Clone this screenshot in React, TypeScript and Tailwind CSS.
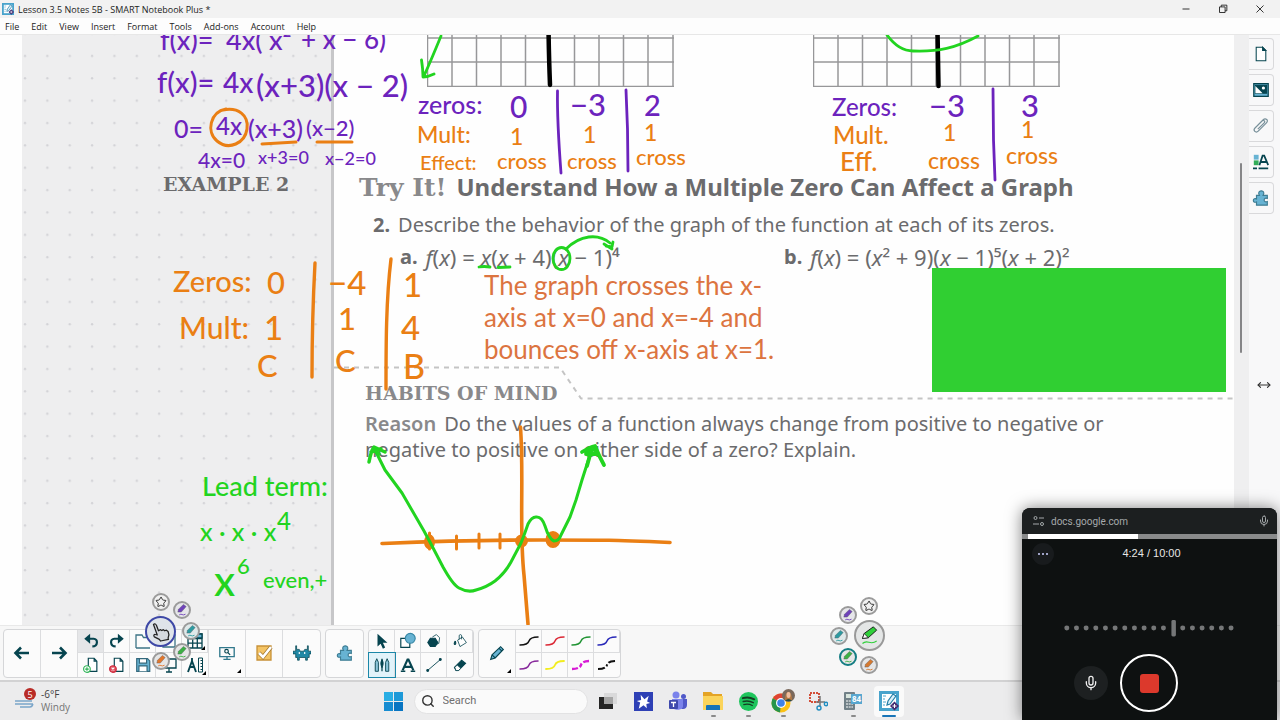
import type { ReactNode } from "react";
import { Mic, MoveHorizontal, Search, Star } from "lucide-react";

const menus = ["File", "Edit", "View", "Insert", "Format", "Tools", "Add-ons", "Account", "Help"];

const PURPLE = "text-[#6c23bd]";
const ORANGE = "text-[#ea7f14]";
const GREEN = "text-[#22d420]";

type Note = { text: string; color: string; at: string };

const notes: Note[] = [
  { text: "f(x)=", color: PURPLE, at: "left-[160px] -top-[9px] text-[27px]" },
  { text: "4x(", color: PURPLE, at: "left-[226px] -top-[9px] text-[27px]" },
  { text: "x²", color: PURPLE, at: "left-[269px] -top-[9px] text-[27px]" },
  { text: "+ x − 6)", color: PURPLE, at: "left-[301px] -top-[9px] text-[26px]" },
  { text: "f(x)=", color: PURPLE, at: "left-[157px] top-[32px] text-[29px]" },
  { text: "4x", color: PURPLE, at: "left-[223px] top-[33px] text-[28px]" },
  { text: "(x+3)(x − 2)", color: PURPLE, at: "left-[256px] top-[35px] text-[31px]" },
  { text: "0=", color: PURPLE, at: "left-[174px] top-[81px] text-[25px]" },
  { text: "4x", color: PURPLE, at: "left-[216px] top-[79px] text-[24px]" },
  { text: "(x+3)", color: PURPLE, at: "left-[248px] top-[81px] text-[25px]" },
  { text: "(x−2)", color: PURPLE, at: "left-[306px] top-[82px] text-[22px]" },
  { text: "4x=0", color: PURPLE, at: "left-[198px] top-[114px] text-[21px]" },
  { text: "x+3=0", color: PURPLE, at: "left-[258px] top-[113px] text-[18px]" },
  { text: "x−2=0", color: PURPLE, at: "left-[325px] top-[114px] text-[18px]" },
  { text: "zeros:", color: PURPLE, at: "left-[418px] top-[57px] text-[25px]" },
  { text: "0", color: PURPLE, at: "left-[510px] top-[56px] text-[30px]" },
  { text: "−3", color: PURPLE, at: "left-[570px] top-[54px] text-[31px]" },
  { text: "2", color: PURPLE, at: "left-[644px] top-[55px] text-[29px]" },
  { text: "Mult:", color: ORANGE, at: "left-[417px] top-[88px] text-[23px]" },
  { text: "Effect:", color: ORANGE, at: "left-[420px] top-[117px] text-[20px]" },
  { text: "cross", color: ORANGE, at: "left-[497px] top-[115px] text-[22px]" },
  { text: "cross", color: ORANGE, at: "left-[567px] top-[115px] text-[22px]" },
  { text: "cross", color: ORANGE, at: "left-[636px] top-[111px] text-[22px]" },
  { text: "Zeros:", color: PURPLE, at: "left-[832px] top-[60px] text-[24px]" },
  { text: "−3", color: PURPLE, at: "left-[929px] top-[55px] text-[31px]" },
  { text: "3", color: PURPLE, at: "left-[1021px] top-[55px] text-[31px]" },
  { text: "Mult.", color: ORANGE, at: "left-[833px] top-[88px] text-[24px]" },
  { text: "Eff.", color: ORANGE, at: "left-[840px] top-[113px] text-[26px]" },
  { text: "cross", color: ORANGE, at: "left-[928px] top-[114px] text-[23px]" },
  { text: "cross", color: ORANGE, at: "left-[1006px] top-[109px] text-[23px]" },
  { text: "1", color: ORANGE, at: "left-[510px] top-[90px] text-[23px]" },
  { text: "1", color: ORANGE, at: "left-[583px] top-[88px] text-[23px]" },
  { text: "1", color: ORANGE, at: "left-[644px] top-[86px] text-[23px]" },
  { text: "1", color: ORANGE, at: "left-[943px] top-[86px] text-[23px]" },
  { text: "1", color: ORANGE, at: "left-[1021px] top-[83px] text-[23px]" },
  { text: "Zeros:", color: ORANGE, at: "left-[173px] top-[231px] text-[29px]" },
  { text: "0", color: ORANGE, at: "left-[267px] top-[232px] text-[31px]" },
  { text: "−4", color: ORANGE, at: "left-[328px] top-[231px] text-[33px]" },
  { text: "1", color: ORANGE, at: "left-[403px] top-[233px] text-[33px]" },
  { text: "Mult:", color: ORANGE, at: "left-[179px] top-[277px] text-[30px]" },
  { text: "1", color: ORANGE, at: "left-[264px] top-[276px] text-[33px]" },
  { text: "1", color: ORANGE, at: "left-[338px] top-[268px] text-[31px]" },
  { text: "4", color: ORANGE, at: "left-[401px] top-[276px] text-[33px]" },
  { text: "C", color: ORANGE, at: "left-[257px] top-[315px] text-[31px]" },
  { text: "C", color: ORANGE, at: "left-[335px] top-[310px] text-[31px]" },
  { text: "B", color: ORANGE, at: "left-[403px] top-[314px] text-[34px]" },
  { text: "Lead term:", color: GREEN, at: "left-[202px] top-[437px] text-[27px]" },
  { text: "x · x · x", color: GREEN, at: "left-[200px] top-[484px] text-[25px]" },
  { text: "4", color: GREEN, at: "left-[277px] top-[474px] text-[24px]" },
  { text: "x", color: GREEN, at: "left-[214px] top-[524px] text-[42px]" },
  { text: "6", color: GREEN, at: "left-[237px] top-[520px] text-[22px]" },
  { text: "even,+", color: GREEN, at: "left-[263px] top-[534px] text-[22px]" },
];

function Glyph({ children, className = "size-5" }: { children: ReactNode; className?: string }) {
  return (
    <svg viewBox="0 0 20 20" className={className} fill="none" stroke="#06444f" strokeWidth="1.3" aria-hidden="true">
      {children}
    </svg>
  );
}

function Puzzle() {
  return (
    <Glyph className="size-[18px]">
      <path d="M5 7h3.200C6.500 4 8 2 10.300 2s3.800 2 2.100 5H17v3.500c-2.500-1-3.500.3-3.500 1.700s1 2.700 3.500 1.700V18H5v-3.600c-2.500 1-3.500-.4-3.500-1.700S2.500 10 5 11z" fill="#67b3d3" stroke="#3f7d93" />
    </Glyph>
  );
}

function Arrow({ flip = false }: { flip?: boolean }) {
  return (
    <Glyph className={flip ? "size-5 rotate-180" : "size-5"}>
      <path d="M4 10h13M9 4.500 3.500 10 9 15.500" strokeWidth="2.600" />
    </Glyph>
  );
}

function Turn({ flip = false }: { flip?: boolean }) {
  return (
    <Glyph className={flip ? "size-[18px] -scale-x-100" : "size-[18px]"}>
      <path d="M5 7.500h8c5 0 5 8.500-1.500 8.500" strokeWidth="2.400" />
      <path d="M9 2v11L2.500 7.500z" fill="#06444f" stroke="none" />
    </Glyph>
  );
}

function Corner() {
  return <span className="absolute right-1 bottom-1 border-2 border-transparent border-r-black border-b-black" />;
}

const page = <path d="M7 2.500h6.500l3 3.200V17H7z M13.500 2.500v3.200h3" fill="#fff" />;

type Tool = { label: string; icon: ReactNode; corner?: boolean; active?: boolean };

const fileTools: Tool[] = [
  { label: "Undo", icon: <Turn />, active: true },
  { label: "Redo", icon: <Turn flip /> },
  { label: "Open", icon: <Glyph><path d="M3 17V4h6l1.500 2.500H18M3 17h14M13 3l2-2 3 3" stroke="#3d7486" /></Glyph> },
  { label: "Paste", icon: <Glyph><path d="M4 4h12v12H4z" stroke="#3d7486" /></Glyph> },
  {
    label: "Table",
    icon: <Glyph><path d="M3 3h14v14H3zM3 7.500h14M3 12.200h14M7.700 3v14M12.300 3v14" /><path d="M3 3h14v4H3z" fill="#67b3d3" /></Glyph>,
    corner: true,
  },
  { label: "Add page", icon: <Glyph className="size-[18px]">{page}<circle cx="5.500" cy="14.500" r="3.700" fill="#fff" stroke="#2fb457" /><path d="M3.500 14.500h4m-2-2v4" stroke="#2fb457" /></Glyph> },
  { label: "Delete page", icon: <Glyph className="size-[18px]">{page}<circle cx="5.500" cy="14.500" r="3.700" fill="#e05361" stroke="#d02c3f" /><path d="m4 13 3 3m0-3-3 3" stroke="#fff" /></Glyph> },
  { label: "Save", icon: <Glyph className="size-[18px]"><path d="M3 3h12l2.500 2.500V17H3z" fill="#67b3d3" stroke="#33687c" /><path d="M6 3h8v5H6zM5.500 17v-6h9v6" fill="#fff" stroke="#33687c" /></Glyph> },
  { label: "Screen shade", icon: <Glyph><path d="M3 4h14v9H3zM10 13v4m-3 0h6" /></Glyph> },
  {
    label: "Measurement tools",
    icon: <Glyph><path d="M7 3v3M7 6l-4 11M7 6l4 11M4.500 12h5" strokeWidth="1.900" /><path d="M13.500 3h4v14h-4zM15.500 5.500h2m-2 3h2m-2 3h2m-2 3h2" strokeWidth="1" /></Glyph>,
    corner: true,
  },
];

const drawTools: Tool[] = [
  { label: "Select", icon: <Glyph className="size-[18px]"><path d="M5 2v14l3.500-3 2.500 5.500 2.500-1.200-2.500-5.300h5z" fill="#06444f" stroke="none" /></Glyph> },
  { label: "Shapes", icon: <Glyph className="size-[18px]"><path d="M2 7h10v10H2z" fill="#fff" /><circle cx="12.500" cy="7" r="5.500" fill="#67b3d3" stroke="#3888a6" /></Glyph> },
  { label: "Regular polygons", icon: <Glyph className="size-4"><path d="m8 5 5-3 4 4-1 7-5 2" fill="#fff" strokeWidth="1" /><path d="M5.500 6.500h6l3.300 5.300-3.300 5.200h-6l-3.300-5.200z" fill="#06444f" /></Glyph> },
  { label: "Fill", icon: <Glyph className="size-4"><path d="m7 9 6-4 5 7-8 5zM9 8V3.500c0-2 3-2 3 0V8" fill="#fff" strokeWidth="1" /><path d="M4 10c-4 6 3 6 0 0" fill="#06444f" /></Glyph> },
  {
    label: "Pens",
    active: true,
    icon: <Glyph className="size-[18px]"><path d="M2.500 7v10h3.500V7L4.200 3zM14 7v10h3.500V7l-1.800-4z" fill="#8cc5da" strokeWidth="1" /><path d="M10 3v14" strokeWidth="1.400" /><path d="M10 4c-2 4-1.500 5 0 9 1.500-4 2-5 0-9" fill="#06444f" strokeWidth="1" /></Glyph>,
  },
  { label: "Text", icon: <Glyph className="size-[18px]"><path d="m4 16 5.500-12h1L16 16M6.500 12h7" strokeWidth="2.400" /><path d="M2 17h5m6 0h5" strokeWidth="1.800" /></Glyph> },
  { label: "Line", icon: <Glyph className="size-[18px]"><path d="M3 16 17 4" strokeWidth="1" /><circle cx="3" cy="16" r="1" fill="#06444f" /><circle cx="17" cy="4" r="1" fill="#06444f" /></Glyph> },
  { label: "Eraser", icon: <Glyph className="size-4"><path d="m3 13 9-9 5 4-9 9H5z" fill="#06444f" /><path d="m3.500 13 3-3 4.500 4-3 3H5z" fill="#fff" strokeWidth="1" /></Glyph> },
];

const penLines = [
  { label: "Black pen", stroke: "#111", width: 1.5 },
  { label: "Red pen", stroke: "#db2734", width: 1.5 },
  { label: "Green pen", stroke: "#219434", width: 1.5 },
  { label: "Blue pen", stroke: "#2929b8", width: 1.5 },
  { label: "Purple pen", stroke: "#87289b", width: 1.5 },
  { label: "Yellow pen", stroke: "#f2ed1f", width: 1.8 },
  { label: "Magenta dashed pen", stroke: "#d81bd5", width: 2.4, dash: "6 2 4 2" },
  { label: "Black dashed pen", stroke: "#111", width: 2.1, dash: "7 2 2 2" },
];

function ToolGroup({ children }: { children: ReactNode }) {
  return <div className="flex h-[49px] divide-x divide-[#dcdddf] rounded border border-[#d5d6d8] bg-[#fbfbfb]">{children}</div>;
}

function BigTool({ label, children, corner = false }: { label: string; children: ReactNode; corner?: boolean }) {
  return (
    <button aria-label={label} className="relative grid w-[37px] place-items-center">
      {children}
      {corner && <Corner />}
    </button>
  );
}

function SmallTool({ tool, highlight, edge }: { tool: Tool; highlight: string; edge: string }) {
  return (
    <button aria-label={tool.label} className={`relative grid w-[26px] place-items-center ${edge} ${tool.active ? highlight : ""}`}>
      {tool.icon}
      {tool.corner && <span className="absolute right-0.5 bottom-0.5 border-2 border-transparent border-r-black border-b-black" />}
    </button>
  );
}

function RingPen({ color }: { color: string }) {
  return (
    <svg viewBox="0 0 20 20" className="size-3.5" fill="none" aria-hidden="true">
      <path d="m4 13 1-4 7-7 4 3-7 8z" fill={color} stroke="#5a5f66" strokeWidth="0.600" />
      <path d="M6 17c4-3 4 2 9-1" stroke={color} strokeWidth="1.300" />
    </svg>
  );
}

const ring = "absolute grid place-items-center rounded-full border-2 size-[18px]";

function Hand() {
  return (
    <svg viewBox="0 0 24 24" className="size-5" fill="#d5d9df" stroke="#222" strokeWidth="1.500" strokeLinejoin="round" aria-hidden="true">
      <path d="M3 3c1.500-1.500 3-.5 3.500 1L9 10.500l2-1.300 2 1 1.800-1 1.700 1.300 2-.7 2 1.500 1 4-1 4 .5 1.500-9.500 2-1.500-2-6-3c-1.500-2 0-3.300 1.500-2.800l2 .6z" />
    </svg>
  );
}

function PenRings() {
  return (
    <>
      <button aria-label="Favourite tools" className={`${ring} bottom-[71px] left-[152px] border-[#9b9b9b] bg-[#f1f1f1]`}><Star className="size-3 text-[#333]" /></button>
      <button aria-label="Purple pen" className={`${ring} bottom-[63px] left-[173px] border-[#9b9b9b] bg-[#e6e6ea]`}><RingPen color="#6f42ba" /></button>
      <button aria-label="Teal pen" className={`${ring} bottom-[42px] left-[182px] border-[#9b9b9b] bg-[#dfe9ea]`}><RingPen color="#2d9aa0" /></button>
      <button aria-label="Green pen" className={`${ring} bottom-[21px] left-[173px] border-[#9b9b9b] bg-[#e6e6e6]`}><RingPen color="#3db044" /></button>
      <button aria-label="Orange pen" className={`${ring} bottom-3 left-[152px] border-[#9b9b9b] bg-[#e6e6e6]`}><RingPen color="#e2762b" /></button>
      <button aria-label="Touch" className="absolute bottom-[35px] left-[145px] grid size-[31px] place-items-center rounded-full border-2 border-[#3e48a6] bg-[#dfe4ea]"><Hand /></button>

      <button aria-label="Favourite tools" className={`${ring} bottom-[67px] left-[860px] border-[#9b9b9b] bg-[#f1f1f1]`}><Star className="size-3 text-[#333]" /></button>
      <button aria-label="Purple pen" className={`${ring} bottom-[58px] left-[839px] border-[#9b9b9b] bg-[#e6e6ea]`}><RingPen color="#6f42ba" /></button>
      <button aria-label="Teal pen" className={`${ring} bottom-[37px] left-[830px] border-[#9b9b9b] bg-[#dfe9ea]`}><RingPen color="#2d9aa0" /></button>
      <button aria-label="Green pen" className={`${ring} bottom-4 left-[839px] border-[#147d83] bg-[#e6e6e6]`}><RingPen color="#3db044" /></button>
      <button aria-label="Orange pen" className={`${ring} bottom-2 left-[860px] border-[#9b9b9b] bg-[#e6e6e6]`}><RingPen color="#d5792f" /></button>
      <button aria-label="Current pen" className="absolute bottom-[31px] left-[854px] grid size-[31px] place-items-center rounded-full border-2 border-[#999] bg-[#e4e6e6]">
        <svg viewBox="0 0 24 24" className="size-5" fill="none" aria-hidden="true">
          <path d="m3 15 2-6 11-8 4 4-10 9z" fill="#2fd03a" stroke="#222" strokeWidth="1.200" />
          <path d="m3 15 2-6 5 5z" fill="#fff" stroke="#222" />
          <path d="M3 21c6-6 9 3 17-3" stroke="#2fd03a" strokeWidth="1.300" />
        </svg>
      </button>
    </>
  );
}

function GraphPaper() {
  const cols = [0.5, 25, 49.5, 74, 98.5, 123, 147.5, 172, 196.5, 221, 246];
  return (
    <svg viewBox="0 0 247 52" className="h-[52px] w-[247px]" stroke="#979799" strokeWidth="1.500" aria-hidden="true">
      {cols.map((x) => <path key={x} d={`M${x} 0V52`} />)}
      {[3, 27, 51.5].map((y) => <path key={y} d={`M0 ${y}H247`} />)}
    </svg>
  );
}

function Ink() {
  return (
    <svg viewBox="0 35 1280 590" className="pointer-events-none absolute top-0 left-0 h-[590px] w-[1280px]" fill="none" strokeLinecap="round" strokeLinejoin="round" aria-hidden="true">
      <path d="M334 367.500H560L581 398.500H1234" stroke="#c4c4c4" strokeWidth="2" strokeDasharray="5 5" strokeLinecap="butt" />
      <g stroke="#000" strokeWidth="4.500">
        <path d="M548.500 30Q549 60 550 85" /><path d="M937.500 30 938.500 86" />
      </g>
      <g stroke="#6c23bd" strokeWidth="2.800">
        <path d="M557.500 91Q557 120 561 173" /><path d="M626 90 627.500 129 628 171" /><path d="M993 89 993.500 140 995 180" />
      </g>
      <g stroke="#ea7f14" strokeWidth="3">
        <path d="M226 109C210 112 206 132 217 141C229 151 245 143 247 129C249 115 238 107 223 110" />
        <path d="M262 144Q280 143 296 142M317 142H352" />
        <path d="M315 263C313 300 312 340 312 377M391 259C386 300 386 345 386 389" strokeWidth="3.400" />
        <path d="M382 543.500C420 542 470 540 540 540S610 540 670 542.500" strokeWidth="3.600" />
        <path d="M520.500 427C524 480 519 530 524 575L528 624" strokeWidth="3.600" />
        <path d="M429.500 533V549M456.500 536V549M479 534V548M500 534V548" />
        <ellipse cx="429.500" cy="542" rx="4" ry="6" fill="#ea7f14" />
        <circle cx="521.500" cy="541" r="5" fill="#ea7f14" />
        <ellipse cx="553" cy="539.500" rx="6" ry="7" fill="#ea7f14" />
      </g>
      <g stroke="#22d420" strokeWidth="2.800">
        <path d="M441 36Q432 58 424 76M421.500 60Q423 70 423 77Q428 77 434 74" />
        <path d="M887 35C895 46 903 51 913 51C938 52 956 48 978 36" />
        <path d="M479 267Q484 266 490 267M498 267.500 510 267" />
        <ellipse cx="561.500" cy="258.500" rx="8.500" ry="11" />
        <path d="M566 249C580 235 598 233 610 243M606 246 612 247 613 242M604 244 612 249" />
        <path d="M375 450 385 470 402 493 424 531 431 544 443 567Q453 585 459 588Q468 593 476 590Q487 587 495 581Q505 573 511 562L521 543Q525 533 528 524Q532 516 537 517Q542 517 545 526Q549 539 554 541Q559 541 561 535L570 517 576 500 582 480 590 455" strokeWidth="3" />
        <path d="M369 462Q371 451 374 447L385 452M371 452 381 449M374 449 379 454" strokeWidth="3.500" />
        <path d="M582 452Q590 447 595 446Q599 456 604 465M586 452 595 449 597 454 586 454M592 448 587 466" strokeWidth="3.800" />
      </g>
    </svg>
  );
}

function FuncX() {
  return <i>x</i>;
}

function Canvas() {
  return (
    <main className="relative flex min-h-0 flex-1 overflow-hidden bg-[#fefefe] font-['Noto_Sans',sans-serif] text-[#6b6b6d]">
      <div className="w-[22px] shrink-0" />
      <aside className="relative w-[309px] shrink-0 bg-[#eeeeef]">
        <svg className="absolute inset-0 h-full w-full" aria-hidden="true">
          <defs>
            <pattern id="dots" x="0" y="10" width="22.360" height="22.360" patternUnits="userSpaceOnUse">
              <circle cx="3" cy="11" r="1.200" fill="#d3d3d7" />
            </pattern>
          </defs>
          <rect width="100%" height="100%" fill="url(#dots)" />
        </svg>
        <h2 className="relative pt-[137px] pl-[141px] font-['DejaVu_Serif',serif] text-[19px] leading-6 font-bold">EXAMPLE 2</h2>
      </aside>
      <div className="w-[3px] shrink-0 bg-[#c7c7c9]" />
      <article className="min-w-0 flex-1 pl-[31px] whitespace-nowrap">
        <div className="flex gap-[139px] pl-[62px]"><GraphPaper /><GraphPaper /></div>
        <h1 className="-ml-1.5 flex items-baseline gap-2.5 pt-[86px] text-[24px] leading-7 font-bold">
          <span className="font-['DejaVu_Serif',serif] text-[25px] text-[#89898b]">Try It!</span>
          <span>Understand How a Multiple Zero Can Affect a Graph</span>
        </h1>
        <p className="flex gap-2 pt-[11px] pl-2 text-[20px] leading-6"><b>2.</b>Describe the behavior of the graph of the function at each of its zeros.</p>
        <div className="grid grid-cols-[384px_auto] pt-2 pl-[35px] text-[20px] leading-6">
          <p className="flex gap-2"><b>a.</b><span className="text-[22px]"><i>f</i>(<FuncX />) = <FuncX />(<FuncX /> + 4)(<FuncX /> − 1)⁴</span></p>
          <p className="flex gap-2"><b>b.</b><span className="text-[22px]"><i>f</i>(<FuncX />) = (<FuncX />² + 9)(<FuncX /> − 1)⁵(<FuncX /> + 2)²</span></p>
        </div>
        <p className="pl-[119px] font-[Lato,sans-serif] text-[26px] leading-8 text-[#dc7440]">
          The graph crosses the x-<br />axis at x=0 and x=-4 and<br />bounces off x-axis at x=1.
        </p>
        <h2 className="pt-4 font-['DejaVu_Serif',serif] text-[19px] leading-6 font-bold text-[#89898b]">HABITS OF MIND</h2>
        <p className="pt-1.5 text-[20px] leading-[26px]">
          <b className="mr-2 font-semibold text-[#89898b]">Reason</b>Do the values of a function always change from positive to negative or<br />
          negative to positive on either side of a zero? Explain.
        </p>
      </article>
      <Ink />
      <div className="absolute top-[233px] left-[932px] h-[124px] w-[294px] bg-[#30cf32]" />
      {notes.map((n) => (
        <span key={n.at} className={`absolute font-[Lato,sans-serif] leading-none font-medium whitespace-nowrap ${n.color} ${n.at}`}>{n.text}</span>
      ))}
      <div className="relative w-[15px] shrink-0 bg-[#efeff0] pt-32 pl-1.5"><div className="h-[190px] w-0.5 rounded bg-[#858587]" /></div>
    </main>
  );
}

function SideTabs() {
  const tabs: Tool[] = [
    { label: "Page sorter", icon: <Glyph className="size-4"><path d="M4 1.500h8l4 4v13H4z" fill="#fff" /><path d="M12 1.500v4h4z" fill="#06444f" /></Glyph> },
    { label: "Gallery", icon: <Glyph className="size-4"><path d="M1 2h18v16H1z" fill="#67b3d3" strokeWidth="1.600" /><path d="M3 4h14v10H3z" fill="#06444f" /><path d="m3 5 9 9H3z" fill="#fff" stroke="none" /><circle cx="13" cy="7.500" r="2" fill="#fff" stroke="none" /></Glyph> },
    { label: "Attachments", icon: <Glyph className="size-4"><path d="m6 14 8-8c2-2-1-4-2.500-2.500l-9 9c-3 3 1 7 4 4l10-10c4-4-1-7-4-4L5 10" stroke="#78909a" strokeWidth="1.500" /></Glyph> },
    { label: "Properties", icon: <Glyph className="size-4"><path d="M1 1h6v6H1z" fill="#67b3d3" stroke="none" /><path d="M1 8h6v6H1z" fill="#31ad58" stroke="none" /><path d="m8 14 4-12h2l5 12M10 10h7M0 18h5m2 0h12" strokeWidth="2.200" /></Glyph> },
    { label: "Add-ons", icon: <Puzzle /> },
  ];
  return (
    <nav className="relative w-[31px] shrink-0 bg-[#f8f8f9]">
      <div className="flex flex-col gap-1 pt-[3px]">
        {tabs.map((t) => (
          <button key={t.label} aria-label={t.label} className="grid h-8 w-[25px] place-items-center rounded-r border border-l-0 border-[#d9d9db] bg-[#f8f8f9]">{t.icon}</button>
        ))}
      </div>
      <button aria-label="Resize side panel" className="absolute top-[343px] left-2"><MoveHorizontal className="size-3.5 text-[#333]" /></button>
    </nav>
  );
}

const cellEdges = "border-[#dcdddf] not-last:border-r";

function Toolbar() {
  return (
    <div className="flex h-[57px] shrink-0 items-center gap-1 border-t border-b-2 border-t-[#e9e9e9] border-b-[#d2d2d3] bg-[#f7f7f7] px-[3px]">
      <ToolGroup>
        <BigTool label="Previous page"><Arrow /></BigTool>
        <BigTool label="Next page"><Arrow flip /></BigTool>
        <div className="grid grid-cols-5 grid-rows-2">
          {fileTools.map((t, i) => <SmallTool key={t.label} tool={t} edge={i < 5 ? `border-b ${cellEdges}` : cellEdges} highlight="bg-[#e5e6e8]" />)}
        </div>
        <BigTool label="View screens" corner>
          <Glyph className="size-[18px]"><path d="M2 4h16v10H2zM10 14v3m-4 0h8" stroke="#32798d" strokeWidth="1.500" /><circle cx="9.500" cy="8" r="2" /><path d="m11 9.500 2.500 2.500" /></Glyph>
        </BigTool>
        <BigTool label="Response">
          <Glyph><path d="M3 3h14v14H3z" fill="#f4c465" stroke="#c79138" /><path d="m5 10 4 4 8-10" stroke="#a0752b" strokeWidth="4" /><path d="m5 10 4 4 8-10" stroke="#fff" strokeWidth="2.600" /></Glyph>
        </BigTool>
        <BigTool label="Lesson activity">
          <Glyph className="size-[18px]"><path d="M4 2v4h3l1 2h4l1-2h3V2h1v6h3v3h-2v4h-2v3h-2v-3H7v3H5v-3H3v-4H0V8h3V2z" fill="#2188a5" strokeWidth=".8" /><path d="M7 9v2m6-2v2" stroke="#fff" /></Glyph>
        </BigTool>
      </ToolGroup>
      <ToolGroup><BigTool label="Add-ons"><Puzzle /></BigTool></ToolGroup>
      <ToolGroup>
        <div className="grid grid-cols-4 grid-rows-2">
          {drawTools.map((t, i) => <SmallTool key={t.label} tool={t} edge={i < 4 ? `border-b ${cellEdges}` : cellEdges} highlight="bg-[#e1f3fa] outline outline-[#1b87a8]" />)}
        </div>
      </ToolGroup>
      <ToolGroup>
        <BigTool label="Pen" corner>
          <Glyph className="size-[18px]"><path d="m3 17 1.500-5L14 3l3 3-9 9.500zM4.500 12 8 15.500M12 4.500 15.500 8" fill="#67b3d3" /></Glyph>
        </BigTool>
        <div className="grid grid-cols-4 grid-rows-2">
          {penLines.map((p, i) => (
            <button key={p.label} aria-label={p.label} className={`grid w-[26px] place-items-center ${cellEdges} ${i < 4 ? "border-b" : ""}`}>
              <svg viewBox="0 0 20 12" className="h-3 w-5" fill="none" stroke={p.stroke} strokeWidth={p.width} strokeDasharray={p.dash} strokeLinecap={p.dash ? "butt" : "round"} aria-hidden="true">
                <path d="M1 10c4 0 8-1 9-4s4-4 9-4" />
              </svg>
            </button>
          ))}
        </div>
      </ToolGroup>
    </div>
  );
}

function NotebookLogo({ className }: { className: string }) {
  return (
    <svg viewBox="0 0 20 20" className={className} fill="none" aria-hidden="true">
      <path d="M0 0h20v20H0z" fill="#48a3cc" />
      <path d="M3 3h14v14H3z" fill="#fff" />
      <path d="M4 5h3M4 8h2M4 11h3M4 14h2" stroke="#48a3cc" />
      <path d="m8 14 1-4 5-7 3 2-6 8z" fill="#d9f0fa" stroke="#277fa7" strokeWidth="1.200" />
      <path d="m15.500 10.500 4.500 4.500-4.500 4.500L11 15z" fill="#432b70" />
      <path d="M15.500 13v4m-2-2h4" stroke="#fff" />
    </svg>
  );
}

const apps: { label: string; running?: boolean; icon: ReactNode }[] = [
  { label: "Task view", icon: <svg viewBox="0 0 20 20" className="size-5" aria-hidden="true"><path d="M1 6h14v12H1z" fill="#242424" /><path d="M6 2h13v11H6z" fill="#d7d7d7" opacity=".9" /><path d="M6 6h9v7H6z" fill="#a5a5a5" /></svg> },
  { label: "Star app", icon: <svg viewBox="0 0 20 20" className="size-[19px]" aria-hidden="true"><path d="M0 0h20v20H0z" fill="#2e40b5" /><path d="M7 3l4 4.500L15.500 4l-1.700 6L17 11.500l-4 1 .5 4.500-3.500-3L5 17.500 6.500 11 3 9.500l4.500-1z" fill="#fff" /></svg> },
  { label: "Teams", icon: <svg viewBox="0 0 20 20" className="size-5" aria-hidden="true"><circle cx="8" cy="4" r="3.500" fill="#7b83eb" /><circle cx="15.500" cy="5.500" r="2.500" fill="#5059c9" /><path d="M5 8h14v6c0 5-6 5-7 2z" fill="#5059c9" /><path d="M4 8h11v7c0 5-11 5-11 0z" fill="#7b83eb" /><rect x="1" y="9" width="9" height="9" rx="1" fill="#3e49ad" /><path d="M3 11.500h5M5.500 11.500V16" stroke="#fff" strokeWidth="1.300" /></svg> },
  { label: "File Explorer", running: true, icon: <svg viewBox="0 0 20 20" className="size-5" aria-hidden="true"><path d="M0 1h8l2 2h9v15H0z" fill="#e4a426" /><path d="M0 5h20v14H0z" fill="#fbd45b" /><path d="M3 19v-4q0-1 1-1h12q1 0 1 1v4z" fill="#1673b8" /></svg> },
  { label: "Spotify", running: true, icon: <svg viewBox="0 0 20 20" className="size-[19px]" fill="none" stroke="#153d23" strokeLinecap="round" aria-hidden="true"><circle cx="10" cy="10" r="10" fill="#1fc55d" stroke="none" /><path d="M4 6.500q6-2 12 1.200" strokeWidth="2" /><path d="M4.500 10q5.500-1.500 10.500 1.200" strokeWidth="1.700" /><path d="M5 13.200q5-1.200 9 1" strokeWidth="1.300" /></svg> },
  { label: "Chrome", running: true, icon: <svg viewBox="0 0 24 24" className="size-6" aria-hidden="true"><circle cx="10" cy="14" r="9.500" fill="#fbc116" /><path d="M10 14 1.800 9.200A9.500 9.500 0 0 1 18.200 9.200z" fill="#df4334" /><path d="m10 14-1 9.500A9.500 9.500 0 0 1 1.800 9.200z" fill="#26944b" /><circle cx="10" cy="14" r="5" fill="#fff" /><circle cx="10" cy="14" r="3.800" fill="#3f82e8" /><circle cx="17.500" cy="6.500" r="6.500" fill="#7a695c" /><path d="M14 11c0-11 7-11 7 0z" fill="#b37945" /><ellipse cx="17.500" cy="6" rx="2" ry="3" fill="#efbea0" /><path d="M14 12q3.500-4 7 0z" fill="#284c43" /></svg> },
  { label: "Snipping Tool", icon: <svg viewBox="0 0 20 20" className="size-5" fill="none" aria-hidden="true"><path d="M2 2h9v9H2z" stroke="#d34e38" strokeWidth="2" strokeDasharray="2 1" /><path d="M12 5v11M8 11h9" stroke="#777" strokeWidth="1.500" /><circle cx="11" cy="17" r="2" stroke="#208dc0" strokeWidth="1.400" /><circle cx="18" cy="13" r="1.700" stroke="#208dc0" strokeWidth="1.400" /></svg> },
  { label: "Calculator", running: true, icon: <span className="relative"><svg viewBox="0 0 20 20" className="size-5" aria-hidden="true"><rect x="1" y="1" width="11" height="18" rx="1" fill="#718087" /><path d="M3 3h7v4H3z" fill="#d9e5dd" /><path d="M3 10h7M3 13h7M3 16h7" stroke="#fff" strokeDasharray="2 .7" /></svg><span className="absolute top-[3px] left-2 bg-[#58a7d0] px-px font-['Open_Sans',sans-serif] text-[8px] leading-[10px] font-bold text-white">84</span></span> },
];

function Taskbar() {
  return (
    <footer className="grid h-[38px] shrink-0 grid-cols-[1fr_auto_1fr] items-center bg-[#ececed] font-['Open_Sans',sans-serif]">
      <button className="flex items-center gap-1.5 pl-[15px] text-left text-[10px] leading-[13px] text-[#3f3f3f]">
        <span className="relative">
          <svg viewBox="0 0 20 24" className="h-6 w-5" fill="none" stroke="#7aa5c9" strokeWidth="1.500" aria-hidden="true"><path d="M0 12h17m-17 3h18m-13 3h10q2 0 3-3" /></svg>
          <span className="absolute -top-px left-[9px] grid size-3 place-items-center rounded-full bg-[#b92c27] text-[9px] text-white">5</span>
        </span>
        <span>-6°F<br /><span className="text-[#757575]">Windy</span></span>
      </button>
      <div className="flex items-center gap-[3px] pl-[7px]">
        <button aria-label="Start" className="mr-2 grid size-[19px] grid-cols-2 gap-px"><span className="bg-[#29aee4]" /><span className="bg-[#1d99d8]" /><span className="bg-[#168cd1]" /><span className="bg-[#0875c2]" /></button>
        <label className="flex h-[25px] w-[174px] items-center gap-2 rounded-full border border-[#e2e2e3] bg-[#fafafa] pl-1.5">
          <Search className="size-3.5 text-[#333]" strokeWidth={2.4} />
          <input aria-label="Search" placeholder="Search" className="min-w-0 flex-1 bg-transparent font-[Roboto,sans-serif] text-[11px] outline-none placeholder:text-[#6f6f6f]" />
        </label>
        <div className="flex items-center">
          {apps.map((a) => (
            <button key={a.label} aria-label={a.label} className="relative grid h-[31px] w-[35px] place-items-center">
              {a.icon}
              {a.running && <span className="absolute bottom-0 left-[15px] h-0.5 w-[5px] rounded bg-[#8a8a8a]" />}
            </button>
          ))}
          <button aria-label="SMART Notebook" className="relative ml-[3px] grid h-[31px] w-[30px] place-items-center rounded bg-[#fafafa]">
            <NotebookLogo className="size-5" />
            <span className="absolute bottom-0 left-2 h-0.5 w-3.5 rounded bg-[#1975b8]" />
          </button>
        </div>
      </div>
    </footer>
  );
}

function Recorder() {
  const dots = Array.from({ length: 18 }, (_, i) => i);
  return (
    <section aria-label="Recording" className="absolute right-[3px] bottom-0 flex h-[212px] w-[255px] flex-col overflow-hidden rounded-t-lg bg-[#0e1111] shadow-[0_0_16px_rgba(0,0,0,0.5)]">
      <header className="flex h-[26px] items-center bg-[#1c1f20] px-[11px] font-[Roboto,sans-serif] text-[10px] text-[#a5a9ab]">
        <svg viewBox="0 0 12 12" className="mr-1.5 size-3" fill="none" stroke="currentColor" aria-hidden="true"><circle cx="2.500" cy="3" r="1.500" /><path d="M6 3h5M0 9h6" /><circle cx="9" cy="9" r="1.500" /></svg>
        <span className="flex-1">docs.google.com</span>
        <Mic className="-mr-1 size-3" />
      </header>
      <div className="h-[5px] bg-[#898a8b]"><div className="ml-1.5 h-full w-[110px] bg-white" /></div>
      <div className="relative pt-1.5 text-center font-['Liberation_Sans',sans-serif] text-[11px] leading-4 text-[#e6e6e6]">
        <button aria-label="More options" className="absolute top-1 left-[10px] flex size-[22px] items-center justify-center gap-0.5 rounded-full bg-[#181b1d]">
          <span className="size-0.5 rounded-full bg-[#cdd2ff]" /><span className="size-0.5 rounded-full bg-[#cdd2ff]" /><span className="size-0.5 rounded-full bg-[#cdd2ff]" />
        </button>
        <span className="pl-1">4:24 / 10:00</span>
      </div>
      <svg viewBox="0 0 256 20" className="mt-[57px] h-5 w-full shrink-0" fill="#757778" aria-hidden="true">
        {dots.map((i) => i === 11 ? <rect key={i} x="150" y="2" width="4.500" height="16.500" rx="1.500" /> : <circle key={i} cx={45 + i * 9.7} cy="10" r="2.500" />)}
      </svg>
      <div className="flex items-center gap-3 pt-4 pl-[52px]">
        <button aria-label="Mute microphone" className="grid size-[34px] place-items-center rounded-full bg-[#1d2021] text-[#eee]"><Mic className="size-4" /></button>
        <button aria-label="Stop recording" className="grid size-[58px] place-items-center rounded-full border-2 border-white"><span className="size-[19px] rounded-[3px] bg-[#dc392c]" /></button>
      </div>
    </section>
  );
}

export default function App() {
  return (
    <div className="relative flex h-screen flex-col overflow-hidden bg-white text-[#222]">
      <header className="flex h-[18px] shrink-0 items-center gap-1 bg-[#f2f2f2] pl-0.5 font-['Open_Sans',sans-serif] text-[9px] leading-none">
        <NotebookLogo className="size-3" />
        <span className="flex-1">Lesson 3.5 Notes 5B - SMART Notebook Plus *</span>
        <div className="flex gap-[23px] pr-[13px]">
          <button aria-label="Minimize"><Glyph className="size-3.5"><path d="M5 10h10" stroke="#222" /></Glyph></button>
          <button aria-label="Restore"><Glyph className="size-3.5"><path d="M5 7h8v8H5zM7.500 7V4.500h8v8H13" stroke="#222" /></Glyph></button>
          <button aria-label="Close"><Glyph className="size-3.5"><path d="m5 5 10 10M15 5 5 15" stroke="#222" /></Glyph></button>
        </div>
      </header>
      <nav className="flex h-[17px] shrink-0 items-center gap-3 border-b border-[#e7e7e7] bg-[#fdfdfd] pl-[5px] font-['Open_Sans',sans-serif] text-[9px] leading-none">
        {menus.map((m) => <button key={m}>{m}</button>)}
      </nav>
      <div className="relative flex min-h-0 flex-1 flex-col">
        <div className="flex min-h-0 flex-1"><Canvas /><SideTabs /></div>
        <Toolbar />
        <PenRings />
      </div>
      <Taskbar />
      <Recorder />
    </div>
  );
}
